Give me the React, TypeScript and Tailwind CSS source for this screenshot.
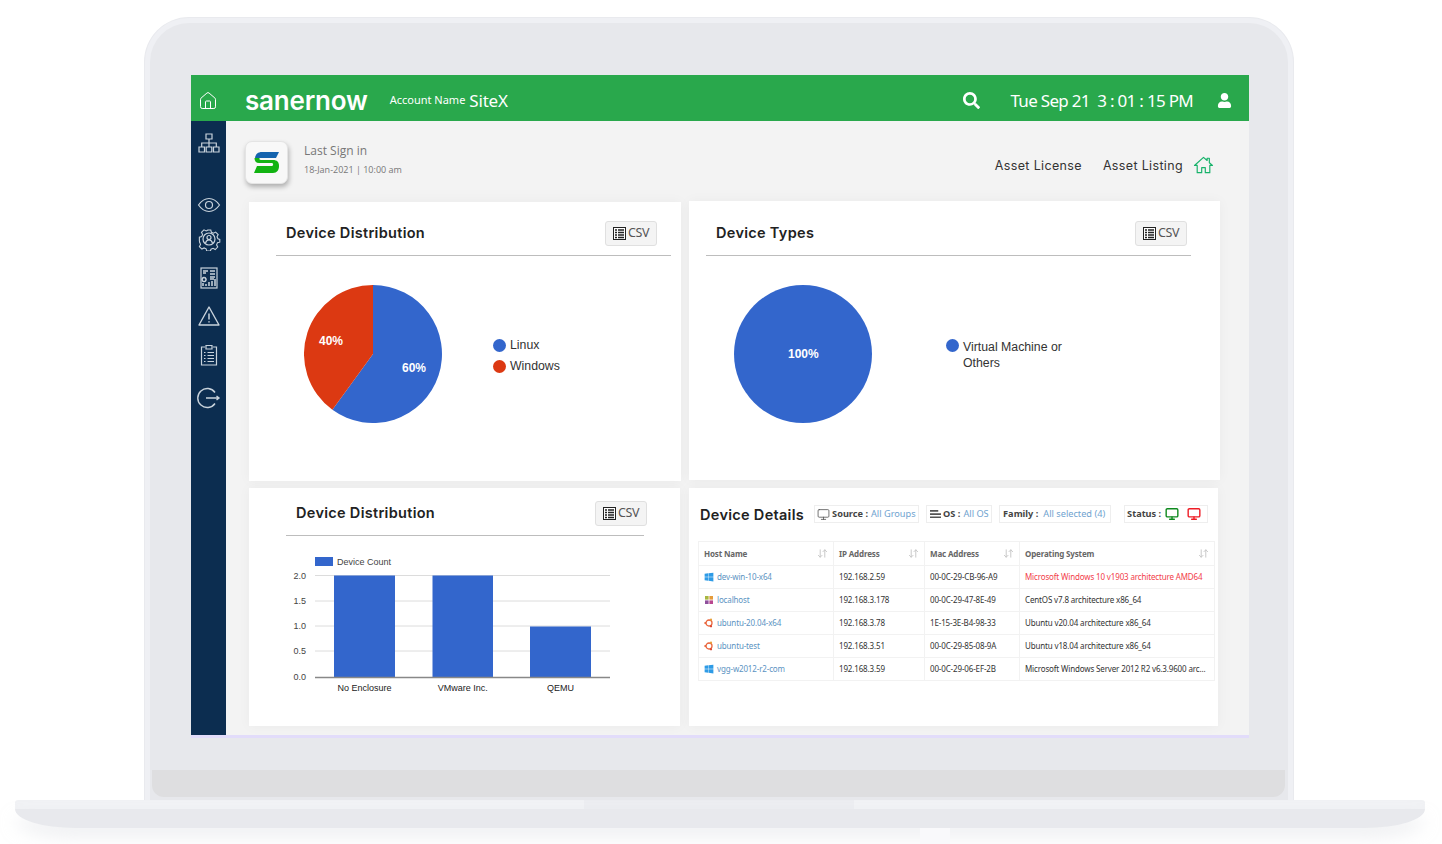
import { FaSearch, FaUser, FaWindows } from "react-icons/fa";
import { Home, Monitor, ArrowDownUp } from "lucide-react";

const blue = "#3366cc";
const red = "#dc3912";

const rows = [
  { os: "win", host: "dev-win-10-x64", ip: "192.168.2.59", mac: "00-0C-29-CB-96-A9", name: "Microsoft Windows 10 v1903 architecture AMD64", warn: true },
  { os: "centos", host: "localhost", ip: "192.168.3.178", mac: "00-0C-29-47-8E-49", name: "CentOS v7.8 architecture x86_64" },
  { os: "ubuntu", host: "ubuntu-20.04-x64", ip: "192.168.3.78", mac: "1E-15-3E-B4-98-33", name: "Ubuntu v20.04 architecture x86_64" },
  { os: "ubuntu", host: "ubuntu-test", ip: "192.168.3.51", mac: "00-0C-29-85-08-9A", name: "Ubuntu v18.04 architecture x86_64" },
  { os: "win", host: "vgg-w2012-r2-com", ip: "192.168.3.59", mac: "00-0C-29-06-EF-2B", name: "Microsoft Windows Server 2012 R2 v6.3.9600 arc..." },
];

const OsIcon = ({ os }: { os: string }) => {
  if (os === "win") return <FaWindows className="size-[10px] shrink-0 text-[#2e9be6]" />;
  if (os === "ubuntu") {
    return (
      <svg viewBox="0 0 10 10" className="size-[10px] shrink-0">
        <circle cx="5" cy="5" r="3" fill="none" stroke="#e9633a" strokeWidth="1.300" />
        <circle cx="1.300" cy="5" r="1.100" fill="#e9633a" />
        <circle cx="7" cy="1.700" r="1.100" fill="#e8a13a" />
        <circle cx="7" cy="8.300" r="1.100" fill="#d9432f" />
      </svg>
    );
  }
  return (
    <svg viewBox="0 0 10 10" className="size-[10px] shrink-0">
      <rect x="1" y="1" width="3.600" height="3.600" fill="#a8b640" />
      <rect x="5.400" y="1" width="3.600" height="3.600" fill="#e59b3a" />
      <rect x="1" y="5.400" width="3.600" height="3.600" fill="#8f4f9c" />
      <rect x="5.400" y="5.400" width="3.600" height="3.600" fill="#b9478f" />
    </svg>
  );
};

const CsvButton = ({ cls = "" }: { cls?: string }) => (
  <div className={`flex h-[25px] w-[52px] shrink-0 items-center justify-center gap-[2px] rounded-[3px] border border-[#e0e0e0] bg-[#f4f4f4] text-[12.500px] text-[#555] font-['Noto_Sans',sans-serif] ${cls}`}>
    <svg viewBox="0 0 13 13" className="size-[13px]">
      <rect x="0.500" y="0.500" width="12" height="12" fill="#fff" stroke="#222" />
      <path d="M2 3h2M5 3h6M2 5.500h2M5 5.500h6M2 8h2M5 8h6M2 10.500h2M5 10.500h6" stroke="#222" strokeWidth="1.300" />
    </svg>
    <span className="tracking-[-0.4px]">CSV</span>
  </div>
);

const Title = ({ children }: { children: string }) => (
  <h3 className="text-[14.500px] font-semibold tracking-[0.3px] text-[#222] font-['Inter',sans-serif]">{children}</h3>
);

const Dot = ({ color }: { color: string }) => <span className="size-[13px] shrink-0 rounded-full" style={{ background: color }} />;

const SideIcon = ({ children, cls }: { children: React.ReactNode; cls: string }) => (
  <svg viewBox="0 0 24 24" fill="none" stroke="#c9d3dc" strokeWidth="1.200" className={`size-[24px] ${cls}`}>
    {children}
  </svg>
);

function Sidebar() {
  return (
    <aside className="flex w-[35px] shrink-0 flex-col items-center bg-[#0c2d50] pl-[1px]">
      <SideIcon cls="mt-[11px]">
        <path d="M9 2h6v5H9zM2 15h5.500v5H2zM9.200 15h5.600v5H9.200zM16.500 15H22v5h-5.500zM12 7v8M4.700 15v-4h14.600v4" />
      </SideIcon>
      <SideIcon cls="mt-[37px]">
        <path d="M1.500 12C5 7 8.500 5.500 12 5.500S19 7 22.500 12C19 17 15.500 18.500 12 18.500S5 17 1.500 12Z" />
        <circle cx="12" cy="12" r="3.500" />
      </SideIcon>
      <SideIcon cls="mt-[10px]">
        <path d="M10 2h4l.7 2.600 2.300 1 2.400-1.300 2.800 2.800-1.300 2.400 1 2.300 2.100.7v3l-2.600.7-1 2.300 1.300 2.400-2.800 2.800-2.400-1.300-2.300 1-.7 2.100h-4l-.7-2.600-2.300-1-2.400 1.300-2.800-2.800 1.300-2.400-1-2.300L1.300 14v-4l2.600-.7 1-2.300-1.300-2.400 2.800-2.800 2.400 1.300 2.300-1Z" transform="translate(1.200 1.200) scale(.9)" />
        <circle cx="12" cy="12" r="6" />
        <circle cx="12" cy="10.500" r="2" />
        <path d="M8.500 16c.5-2 2-3 3.500-3s3 1 3.500 3" />
      </SideIcon>
      <SideIcon cls="mt-[15px]">
        <rect x="4" y="2" width="16" height="20" />
        <path d="M6 5h5M6 7h3M13 5h5M13 8h5M7 11.500a2 2 0 1 0 .1 0M13 11h5M13 13h4M6 20v-3M9 20v-2M12 20v-4M15 20v-5M18 20v-7" strokeWidth="1.500" />
      </SideIcon>
      <SideIcon cls="mt-[14px]">
        <path d="M12 3 22 21H2Z" strokeLinejoin="round" strokeWidth="1.400" />
        <path d="M12 9.500v6M12 17.300v1.200" strokeWidth="1.500" />
      </SideIcon>
      <SideIcon cls="mt-[15px]">
        <path d="M8 4H4.500v18h15V4H16M9 2.500h6v3.500H9z" />
        <path d="M7 9.500h1.500M7 12.500h1.500M7 15.500h1.500M7 18.500h1.500M10.500 9.500H17M10.500 12.500H17M10.500 15.500H17M10.500 18.500H17" />
      </SideIcon>
      <SideIcon cls="mt-[19px]">
        <path d="M18 6.500A9.500 9.500 0 1 0 18 17.500M9 12h13M19.500 10l2.500 2-2.500 2" strokeWidth="1.400" />
      </SideIcon>
    </aside>
  );
}

function TopBar() {
  return (
    <header className="flex h-[46px] shrink-0 items-center bg-[#29a84c] pt-[5px] text-white">
      <Home className="ml-[7px] size-[20px]" strokeWidth={1.200} />
      <span className="ml-[27px] text-[26px] font-semibold tracking-[-0.2px] font-['Inter',sans-serif]">sanernow</span>
      <span className="ml-[22px] text-[11px] font-['Noto_Sans',sans-serif]">Account Name</span>
      <span className="ml-[4px] text-[17px] tracking-[-0.2px] font-['Noto_Sans',sans-serif]">SiteX</span>
      <FaSearch className="ml-auto size-[17px]" />
      <span className="ml-[30px] whitespace-pre text-[17px] tracking-[-0.7px] font-['Noto_Sans',sans-serif]">Tue Sep 21  3 : 01 : 15 PM</span>
      <FaUser className="ml-[24px] mr-[17px] size-[15px]" />
    </header>
  );
}

function SubHeader() {
  return (
    <div className="flex h-[81px] shrink-0 items-center pl-[19px] pr-[35px]">
      <div className="mt-[1px] flex size-[43px] items-center justify-center rounded-[7px] border border-[#e4e4e4] bg-[#f8f8f8] shadow-[1px_3px_5px_rgba(0,0,0,0.28)]">
        <svg viewBox="0 0 25 21" className="h-[21px] w-[25px]">
          <path d="M1 6C1.500 2 4 0 8 0H25L22 6Z" fill="#1463ae" />
          <path d="M.5 6C.5 9 2 11 5 11H18C19.500 11 19.500 14 18 14H3L0 21H19C23 21 25 18 25 14 25 10 23 8 19 8H7C5 8 5 6 6 6Z" fill="#12b312" />
        </svg>
      </div>
      <div className="mb-[4px] ml-[16px] font-['Open_Sans',sans-serif] text-[#777]">
        <div className="text-[12px] leading-[18px]">Last Sign in</div>
        <div className="mt-[3px] text-[9px] leading-[14px]">18-Jan-2021 | 10:00 am</div>
      </div>
      <div className="ml-auto mt-[10px] flex items-center text-[12.500px] tracking-[0.35px] text-[#333] font-['Inter',sans-serif]">
        <span>Asset License</span>
        <span className="ml-[21px]">Asset Listing</span>
        <svg viewBox="0 0 22 20" fill="none" stroke="#17b26a" strokeWidth="1.300" className="-mt-[3px] ml-[10px] h-[18px] w-[21px]">
          <path d="M1 10.500 11 1.500l4 3.500V2.500h2.500V7.500L21 10.500h-3V18.500h-5v-5.500H9v5.500H4V10.500Z" strokeLinejoin="round" />
        </svg>
      </div>
    </div>
  );
}

function DistributionCard() {
  return (
    <section className="bg-white shadow-[0_0_12px_rgba(0,0,0,0.04)]">
      <div className="ml-[27px] mr-[10px] flex h-[54px] items-center justify-between border-b border-[#bdbdbd] pl-[10px] pr-[14px] pt-[9px]">
        <Title>Device Distribution</Title>
        <CsvButton />
      </div>
      <div className="flex pl-[55px] pt-[29px]">
        <svg viewBox="0 0 138 138" className="size-[138px]">
          <path d="M69 69V0A69 69 0 1 1 28.400 124.800Z" fill={blue} />
          <path d="M69 69 28.400 124.800A69 69 0 0 1 69 0Z" fill={red} />
          <text x="98" y="87" fill="#fff" fontSize="12" fontWeight="700" fontFamily="Liberation Sans">60%</text>
          <text x="15" y="60" fill="#fff" fontSize="12" fontWeight="700" fontFamily="Liberation Sans">40%</text>
        </svg>
        <div className="ml-[51px] mt-[50px] text-[12.300px] leading-[21px] text-[#333] font-['Liberation_Sans',sans-serif]">
          <div className="flex items-center gap-[4px]"><Dot color={blue} />Linux</div>
          <div className="flex items-center gap-[4px]"><Dot color={red} />Windows</div>
        </div>
      </div>
    </section>
  );
}

function TypesCard() {
  return (
    <section className="-mt-[1px] mb-[1px] bg-white shadow-[0_0_12px_rgba(0,0,0,0.04)]">
      <div className="ml-[17px] mr-[29px] flex h-[55px] items-center justify-between border-b border-[#bdbdbd] pl-[10px] pr-[4px] pt-[10px]">
        <Title>Device Types</Title>
        <CsvButton />
      </div>
      <div className="flex pl-[44.500px] pt-[29px]">
        <svg viewBox="0 0 138 138" className="size-[138px]">
          <circle cx="69" cy="69" r="69" fill={blue} />
          <text x="54" y="73" fill="#fff" fontSize="12" fontWeight="700" fontFamily="Liberation Sans">100%</text>
        </svg>
        <div className="ml-[74.500px] mt-[54px] flex gap-[4px] text-[12.300px] leading-[16px] text-[#333] font-['Liberation_Sans',sans-serif]">
          <Dot color={blue} />
          <span className="w-[110px]">Virtual Machine or Others</span>
        </div>
      </div>
    </section>
  );
}

function BarCard() {
  const ticks = [
    { l: "2.0", y: 30.5 },
    { l: "1.5", y: 56 },
    { l: "1.0", y: 81 },
    { l: "0.5", y: 106 },
  ];
  const bars = [
    { x: 85, y: 30.5, w: 61, l: "No Enclosure" },
    { x: 183.5, y: 30.5, w: 60.5, l: "VMware Inc." },
    { x: 281, y: 81.5, w: 61, l: "QEMU" },
  ];
  return (
    <section className="mr-[1px] bg-white shadow-[0_0_12px_rgba(0,0,0,0.04)]">
      <div className="ml-[37px] mr-[36px] flex h-[48px] items-center justify-between border-b border-[#bdbdbd] pl-[10px] pt-[3px]">
        <Title>Device Distribution</Title>
        <CsvButton cls="-mr-[3px]" />
      </div>
      <svg viewBox="0 0 431 184" className="mt-[9px] h-[184px] w-[431px]" fontFamily="Liberation Sans" fontSize="9">
        <rect x="66" y="12" width="18" height="9" fill={blue} />
        <text x="88" y="20" fill="#444">Device Count</text>
        {ticks.map((t) => (
          <g key={t.l}>
            <line x1="66" x2="361" y1={t.y} y2={t.y} stroke="#dcdcdc" />
            <text x="57" y={t.y + 3} textAnchor="end" fill="#444">{t.l}</text>
          </g>
        ))}
        {bars.map((b) => (
          <g key={b.l}>
            <rect x={b.x} y={b.y} width={b.w} height={132 - b.y} fill={blue} />
            <text x={b.x + b.w / 2} y="146" textAnchor="middle" fill="#222">{b.l}</text>
          </g>
        ))}
        <line x1="66" x2="361" y1="132.500" y2="132.500" stroke="#888" strokeWidth="1.500" />
        <text x="57" y="135" textAnchor="end" fill="#444">0.0</text>
      </svg>
    </section>
  );
}

const Chip = ({ children, cls }: { children: React.ReactNode; cls: string }) => (
  <div className={`flex h-[18px] items-center whitespace-nowrap border border-[#eeeeee] bg-white text-[9.200px] font-['Noto_Sans',sans-serif] ${cls}`}>
    {children}
  </div>
);

const SortIcon = () => <ArrowDownUp className="ml-auto size-[11px] text-[#c4c4c4]" strokeWidth={2} />;

function DetailsCard() {
  return (
    <section className="mr-[2px] bg-white shadow-[0_0_12px_rgba(0,0,0,0.04)]">
      <div className="flex h-[52px] items-center pl-[11px]">
        <div className="mt-[2px]"><Title>Device Details</Title></div>
        <Chip cls="ml-[10px] w-[105px] pl-[2px]">
          <Monitor className="size-[13px] text-[#555]" strokeWidth={1.500} />
          <b className="ml-[2px] text-[#444]">Source :</b>
          <span className="ml-[3px] text-[#6fa3cf]">All Groups</span>
        </Chip>
        <Chip cls="ml-[7px] w-[66px] pl-[3px]">
          <svg viewBox="0 0 12 9" className="w-[11px]">
            <path d="M0 0h9v2H0zM0 3.500h12v2H0zM0 7h12v2H0z" fill="#555" />
          </svg>
          <b className="ml-[2px] text-[#444]">OS :</b>
          <span className="ml-[3px] text-[#6fa3cf]">All OS</span>
        </Chip>
        <Chip cls="ml-[7px] w-[112px] pl-[3px]">
          <b className="text-[#444]">Family :</b>
          <span className="ml-[5px] text-[#6fa3cf]">All selected (4)</span>
        </Chip>
        <Chip cls="ml-[13px] w-[84px] pl-[2px]">
          <b className="text-[#444]">Status :</b>
          <Monitor className="ml-[4px] size-[14px] text-[#0f8a1f]" strokeWidth={2.400} />
          <Monitor className="ml-[8px] size-[14px] text-[#ee1c25]" strokeWidth={2.400} />
        </Chip>
      </div>
      <table className="ml-[9px] mt-[1px] w-[516px] table-fixed border-collapse text-[8px] tracking-[-0.15px] text-[#333] font-['Noto_Sans',sans-serif]">
        <colgroup>
          <col className="w-[135px]" />
          <col className="w-[91px]" />
          <col className="w-[95px]" />
          <col className="w-[195px]" />
        </colgroup>
        <thead>
          <tr className="h-[24px] text-[#666]">
            {["Host Name", "IP Address", "Mac Address", "Operating System"].map((h) => (
              <th key={h} className="border border-[#f2f2f2] px-[5px] text-left font-bold">
                <div className="flex items-center">{h}<SortIcon /></div>
              </th>
            ))}
          </tr>
        </thead>
        <tbody>
          {rows.map((r) => (
            <tr key={r.host} className="h-[23px]">
              <td className="border border-[#f2f2f2] px-[5px]">
                <div className="flex items-center gap-[3px] text-[#5b93c2]"><OsIcon os={r.os} />{r.host}</div>
              </td>
              <td className="border border-[#f2f2f2] px-[5px]">{r.ip}</td>
              <td className="border border-[#f2f2f2] px-[5px]">{r.mac}</td>
              <td className={`whitespace-nowrap border border-[#f2f2f2] px-[5px] ${r.warn ? "text-[#f2404a]" : ""}`}>{r.name}</td>
            </tr>
          ))}
        </tbody>
      </table>
    </section>
  );
}

function Screen() {
  return (
    <div className="ml-[41px] flex h-[663px] w-[1058px] flex-col border-b-[3px] border-[#e2dcfa]">
      <TopBar />
      <div className="flex min-h-0 flex-1">
        <Sidebar />
        <main className="flex min-w-0 flex-1 flex-col bg-[#f3f3f3]">
          <SubHeader />
          <div className="grid grid-cols-[432px_531px] grid-rows-[279px_238px] gap-x-[8px] gap-y-[7px] pl-[23px]">
            <DistributionCard />
            <TypesCard />
            <BarCard />
            <DetailsCard />
          </div>
        </main>
      </div>
    </div>
  );
}

export default function App() {
  return (
    <div className="relative h-[844px] w-[1442px] overflow-hidden bg-white pt-[18px]">
      <div className="ml-[145px] flex h-[782px] w-[1148px] flex-col rounded-t-[44px] border-x-[5px] border-t-[5px] border-[#eff0f4] bg-[#e7e8ec] pt-[52px] shadow-[0_0_0_1px_#e9eaee]">
        <Screen />
        <div className="ml-[2px] mr-[3px] mt-[32px] h-[27px] rounded-b-[12px] bg-[#dedee0]" />
      </div>
      <div className="ml-[15px] h-[9px] w-[1410px] rounded-t-[3px] bg-[#f1f2f5]">
        <div className="ml-[569px] h-[9px] w-[270px] bg-[#ecedf1]" />
      </div>
      <div className="ml-[15px] h-[19px] w-[1410px] bg-[#e8e9ed] shadow-[0_10px_16px_rgba(225,227,232,0.5)] [border-radius:0_0_60px_60px/0_0_19px_19px]" />
      <div className="ml-[920px] h-[16px] w-[30px] bg-[#f9f9fb]" />
    </div>
  );
}
